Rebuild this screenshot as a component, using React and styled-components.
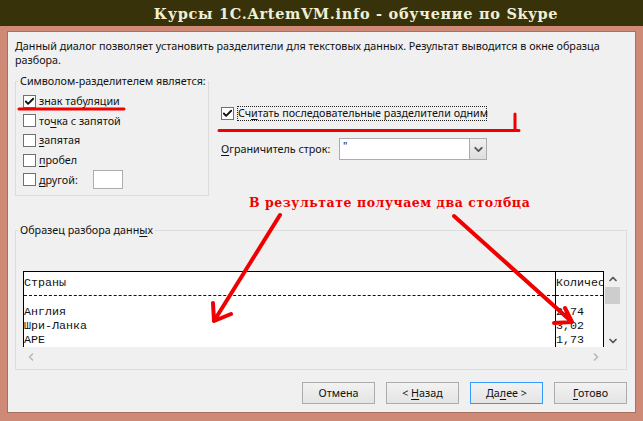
import React from "react";
import styled, { createGlobalStyle } from "styled-components";
import { Check, ChevronDown, ChevronUp, ChevronLeft, ChevronRight } from "lucide-react";

const GlobalStyle = createGlobalStyle`
  html, body {
    margin: 0;
    padding: 0;
    background: #cf8a77;
  }
  body {
    font-family: "Noto Sans", "Liberation Sans", sans-serif;
    font-size: 10.75px;
    color: #111;
  }
`;

const Page = styled.div`
  position: relative;
  width: 643px;
  height: 421px;
  overflow: hidden;
  display: flex;
  flex-direction: column;
  background: #cf8a77;
`;

const Header = styled.header`
  height: 26px;
  flex: none;
  background: #37320a;
  color: #efefd6;
  display: flex;
  align-items: center;
  justify-content: center;
  font-family: "DejaVu Serif", "Liberation Serif", serif;
  font-weight: 700;
  font-size: 14.5px;
  letter-spacing: 0.7px;
  white-space: nowrap;
  padding-left: 69px;
`;

const Frame = styled.div`
  flex: 1;
  padding: 5px 8px 8px 7px;
  display: flex;
  min-height: 0;
`;

const Panel = styled.main`
  flex: 1;
  background: #f0f0f0;
  border: 1px solid #a8705f;
  padding: 7px 8px 8px 7px;
  display: flex;
  flex-direction: column;
`;

const Intro = styled.p`
  margin: 0 0 7px;
  line-height: 14px;
  width: 600px;
`;

const TopRow = styled.div`
  display: flex;
  height: 122px;
`;

const Group = styled.fieldset`
  margin: 0;
  padding: 0 0 0 7px;
  border: 1px solid #dcdcdc;
  width: ${props => props.width}px;
  height: ${props => props.height}px;
  box-sizing: border-box;
  flex: none;
  min-width: 0;
`;

const Legend = styled.legend`
  padding: 0 2px;
  margin-left: -5px;
  line-height: 14px;
  white-space: nowrap;
`;

const Options = styled.div`
  display: flex;
  flex-direction: column;
  gap: 5.7px;
  margin-top: 6px;
`;

const Option = styled.div`
  display: flex;
  align-items: center;
  height: 14px;
  gap: 3px;
`;

const Box = styled.span`
  width: 13px;
  height: 13px;
  box-sizing: border-box;
  flex: none;
  background: #fff;
  border: 1px solid #707070;
  display: flex;
  align-items: center;
  justify-content: center;
  color: #111;
`;

const OtherInput = styled.span`
  width: 30px;
  height: 19px;
  box-sizing: border-box;
  margin-left: 12px;
  background: #fff;
  border: 1px solid #acacac;
`;

const Key = styled.u`
  text-underline-offset: 2px;
`;

const RightColumn = styled.div`
  margin-left: 12px;
  padding-top: 32px;
  display: flex;
  flex-direction: column;
`;

const FocusLabel = styled.span`
  border: 1px dotted #222;
  padding: 0;
  line-height: 13px;
  width: 250px;
  box-sizing: border-box;
  white-space: nowrap;
`;

const DelimiterRow = styled.div`
  display: flex;
  align-items: center;
  margin-top: 18px;
  height: 22px;
`;

const DelimiterLabel = styled.span`
  width: 118px;
`;

const Select = styled.div`
  width: 148px;
  height: 22px;
  box-sizing: border-box;
  background: #fff;
  border: 1px solid #acacac;
  display: flex;
  justify-content: space-between;
  padding-left: 3px;
`;

const SelectButton = styled.span`
  width: 16px;
  background: linear-gradient(#f0f0f0, #dedede);
  border-left: 1px solid #acacac;
  display: flex;
  align-items: center;
  justify-content: center;
  color: #555;
`;

const SampleGroup = styled(Group)`
  margin-top: 27px;
  padding-top: 34px;
`;

const TableRow = styled.div`
  display: flex;
`;

const Table = styled.div`
  width: 581px;
  height: 76px;
  box-sizing: border-box;
  background: #fff;
  border: 1.5px solid #000;
  border-bottom: none;
  display: grid;
  grid-template-columns: 531px 1fr;
  overflow: hidden;
  font-family: "Liberation Mono", monospace;
  font-size: 11.67px;
  line-height: 14px;
  color: #111;
`;

const Column = styled.div`
  border-left: ${props => (props.$divided ? "1.5px solid #000" : "none")};
  overflow: hidden;
  white-space: nowrap;
`;

const ColumnHead = styled.div`
  height: 23px;
  padding-top: 4px;
  box-sizing: border-box;
`;

const Dashes = styled.div`
  height: 9px;
  border-top: 1px dashed #111;
`;

const VScroll = styled.div`
  width: 17px;
  height: 76px;
  display: flex;
  flex-direction: column;
  align-items: center;
  color: #555;
  padding-top: 2px;
  box-sizing: border-box;
`;

const VThumb = styled.div`
  width: 15px;
  height: 17px;
  margin-top: 2px;
  background: #cdcdcd;
`;

const ScrollGap = styled.div`
  flex: 1;
`;

const HScroll = styled.div`
  width: 581px;
  height: 20px;
  display: flex;
  justify-content: space-between;
  align-items: center;
  color: #bbb;
  padding: 0 2px;
  box-sizing: border-box;
`;

const Buttons = styled.div`
  display: flex;
  justify-content: flex-end;
  gap: 11px;
  margin-top: 12px;
`;

const Button = styled.button`
  width: 73px;
  height: 22px;
  box-sizing: border-box;
  padding: 0;
  background: linear-gradient(#f2f2f2, #e4e4e4);
  border: 1px solid ${props => (props.$primary ? "#3399ff" : "#acacac")};
  font: inherit;
  color: #111;
`;

const Overlay = styled.svg`
  position: absolute;
  inset: 0;
  pointer-events: none;
`;

const Note = styled.div`
  position: absolute;
  left: 249px;
  top: 195px;
  color: #f00000;
  font-family: "DejaVu Serif", "Liberation Serif", serif;
  font-weight: 700;
  font-size: 12.5px;
  letter-spacing: 0.55px;
  white-space: nowrap;
`;

const separators = [
  { label: <>знак табуляции</>, checked: true },
  { label: <>то<Key>ч</Key>ка с запятой</> },
  { label: <><Key>з</Key>апятая</> },
  { label: <><Key>п</Key>робел</> },
  { label: <><Key>д</Key>ругой:</>, other: true },
];

const rows = [
  ["Англия", "2,74"],
  ["Шри-Ланка", "3,02"],
  ["АРЕ", "1,73"],
];

const CheckBox = ({ checked }) => (
  <Box>{checked && <Check size={11} strokeWidth={4} />}</Box>
);

const App = () => (
  <Page>
    <GlobalStyle />
    <Header>Курсы 1C.ArtemVM.info - обучение по Skype</Header>
    <Frame>
      <Panel>
        <Intro>
          Данный диалог позволяет установить разделители для текстовых данных. Результат выводится в окне образца разбора.
        </Intro>
        <TopRow>
          <Group width={194} height={122}>
            <Legend>Символом-разделителем является:</Legend>
            <Options>
              {separators.map((item, i) => (
                <Option key={i}>
                  <CheckBox checked={item.checked} />
                  <span>{item.label}</span>
                  {item.other && <OtherInput />}
                </Option>
              ))}
            </Options>
          </Group>
          <RightColumn>
            <Option>
              <CheckBox checked />
              <FocusLabel>Сч<Key>и</Key>тать последовательные разделители одним</FocusLabel>
            </Option>
            <DelimiterRow>
              <DelimiterLabel><Key>О</Key>граничитель строк:</DelimiterLabel>
              <Select>
                <span>"</span>
                <SelectButton><ChevronDown size={13} strokeWidth={3.5} /></SelectButton>
              </Select>
            </DelimiterRow>
          </RightColumn>
        </TopRow>
        <SampleGroup width={612} height={147}>
          <Legend>Образец разбора данн<Key>ы</Key>х</Legend>
          <TableRow>
            <Table>
              <Column>
                <ColumnHead>Страны</ColumnHead>
                <Dashes />
                {rows.map(row => <div key={row[0]}>{row[0]}</div>)}
              </Column>
              <Column $divided>
                <ColumnHead>Количес</ColumnHead>
                <Dashes />
                {rows.map(row => <div key={row[0]}>{row[1]}</div>)}
              </Column>
            </Table>
            <VScroll>
              <ChevronUp size={12} strokeWidth={3.5} />
              <VThumb />
              <ScrollGap />
              <ChevronDown size={12} strokeWidth={3.5} />
            </VScroll>
          </TableRow>
          <HScroll>
            <ChevronLeft size={12} strokeWidth={3.5} />
            <ChevronRight size={12} strokeWidth={3.5} />
          </HScroll>
        </SampleGroup>
        <Buttons>
          <Button>Отмена</Button>
          <Button>&lt; <Key>Н</Key>азад</Button>
          <Button $primary>Да<Key>л</Key>ее &gt;</Button>
          <Button><Key>Г</Key>отово</Button>
        </Buttons>
      </Panel>
    </Frame>
    <Overlay width="643" height="421" viewBox="0 0 643 421" fill="none" stroke="#f00000" strokeLinecap="round" strokeLinejoin="round">
      <path d="M19 109 H124" strokeWidth="3" />
      <path d="M219 130.5 H519 M515 114 V130.5" strokeWidth="3" />
      <path d="M280 215 L214 321 M213 303 L214 321 L231 314" strokeWidth="4" />
      <path d="M454 216 L572 322 M565 308 L572 322 L554 323" strokeWidth="4" />
    </Overlay>
    <Note>В результате получаем два столбца</Note>
  </Page>
);

export default App;
